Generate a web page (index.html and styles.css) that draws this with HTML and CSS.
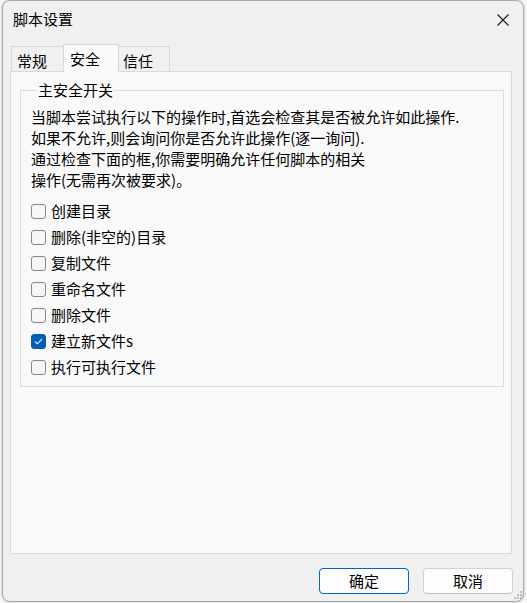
FILE: index.html
```html
<!DOCTYPE html>
<html lang="zh-CN">
<head>
<meta charset="utf-8">
<title>脚本设置</title>
<link rel="stylesheet" href="styles.css">
</head>
<body>
<div class="window">
  <div class="titlebar">
    <span class="title">脚本设置</span>
    <svg class="close" width="12" height="12" viewBox="0 0 12 12"><path d="M0.5 0.5 L11.5 11.5 M11.5 0.5 L0.5 11.5" stroke="#1b1b1b" stroke-width="1.1" fill="none"/></svg>
  </div>
  <div class="tabs">
    <div class="tab tab-1">常规</div>
    <div class="tab tab-2 selected">安全</div>
    <div class="tab tab-3">信任</div>
  </div>
  <div class="panel">
    <fieldset class="group">
      <legend>主安全开关</legend>
      <p class="desc">当脚本尝试执行以下的操作时,首选会检查其是否被允许如此操作.<br>如果不允许,则会询问你是否允许此操作(逐一询问).<br>通过检查下面的框,你需要明确允许任何脚本的相关<br>操作(无需再次被要求)。</p>
      <ul class="checks">
        <li><span class="box"></span>创建目录</li>
        <li><span class="box"></span>删除(非空的)目录</li>
        <li><span class="box"></span>复制文件</li>
        <li><span class="box"></span>重命名文件</li>
        <li><span class="box"></span>删除文件</li>
        <li><span class="box checked"><svg width="15" height="15" viewBox="0 0 15 15"><path d="M4 7.6 L6.3 9.8 L11 5.2" stroke="#fff" stroke-width="1.1" fill="none"/></svg></span>建立新文件s</li>
        <li><span class="box"></span>执行可执行文件</li>
      </ul>
    </fieldset>
  </div>
  <div class="buttons">
    <button class="btn default">确定</button>
    <button class="btn">取消</button>
  </div>
  <svg class="grip" width="8" height="8" viewBox="0 0 8 8"><g fill="#bdbdbd"><rect x="6" y="0" width="2" height="2"/><rect x="3" y="3" width="2" height="2"/><rect x="6" y="3" width="2" height="2"/><rect x="0" y="6" width="2" height="2"/><rect x="3" y="6" width="2" height="2"/><rect x="6" y="6" width="2" height="2"/></g></svg>
</div>
</body>
</html>
```

FILE: styles.css
```css
* { box-sizing: border-box; }
html, body { margin: 0; padding: 0; }
body {
  background: #f7f7f7;
  font-family: "Noto Sans CJK SC", "Microsoft YaHei", sans-serif;
  font-size: 15px;
  color: #000;
  width: 527px;
  height: 603px;
  overflow: hidden;
}
.window {
  position: relative;
  margin-left: 2px;
  width: 522px;
  height: 602px;
  background: #f0f0f0;
  border: 1px solid #a9a9a9;
  border-radius: 8px;
  box-shadow: 0 0 3px rgba(0,0,0,0.25);
  display: flex;
  flex-direction: column;
}
.titlebar {
  height: 36px;
  display: flex;
  align-items: center;
  justify-content: space-between;
  padding-left: 10px;
  padding-right: 14px;
}
.title { line-height: 20px; }
.close { display: block; margin-top: 1px; }
.tabs {
  margin-top: 7px;
  height: 27px;
  margin-left: 8px;
  display: flex;
  align-items: flex-end;
  position: relative;
  z-index: 1;
}
.tab {
  height: 25px;
  border: 1px solid #d9d9d9;
  border-bottom: none;
  background: #f0f0f0;
  line-height: 25px;
  padding-top: 1px;
}
.tab-1 { width: 52px; padding-left: 5px; border-right: none; }
.tab-2 { width: 56px; padding-left: 6px; }
.tab-3 { width: 51px; padding-left: 4px; border-left: none; }
.tab.selected {
  height: 28px;
  margin-bottom: -1px;
  background: #f9f9f9;
  padding-top: 0;
  line-height: 28px;
}
.panel {
  margin-left: 7px;
  width: 502px;
  height: 483px;
  background: #f9f9f9;
  border: 1px solid #d9d9d9;
  padding-top: 8px;
}
.group {
  margin: 0 0 0 9px;
  width: 484px;
  border: 1px solid #dcdcdc;
  padding: 6px 10px 6px 10px;
}
.group legend {
  padding: 0 1px;
  margin-left: 6px;
  line-height: 20px;
}
.desc {
  margin: 0;
  line-height: 21px;
  white-space: nowrap;
}
.checks {
  list-style: none;
  margin: 8px 0 0 0;
  padding: 0;
}
.checks li {
  height: 26px;
  display: flex;
  align-items: center;
  gap: 5px;
  line-height: 26px;
}
.box {
  width: 15px;
  height: 15px;
  border: 1px solid #878787;
  border-radius: 3px;
  background: #f6f6f6;
  flex: none;
  position: relative;
}
.box.checked {
  background: #005fb8;
  border-color: #005fb8;
}
.box.checked svg { position: absolute; left: -1px; top: -1px; }
.buttons {
  display: flex;
  justify-content: flex-end;
  gap: 14px;
  margin-top: 14px;
  padding-right: 10px;
}
.btn {
  width: 90px;
  height: 26px;
  font-family: inherit;
  font-size: 15px;
  line-height: 20px;
  color: #000;
  background: #fdfdfd;
  border: 1px solid #d2d2d2;
  border-bottom-color: #bdbdbd;
  border-radius: 4px;
  padding: 0;
}
.btn.default {
  border: 1px solid #0067c0;
}
.grip {
  position: absolute;
  right: 1px;
  bottom: 2px;
}
```
